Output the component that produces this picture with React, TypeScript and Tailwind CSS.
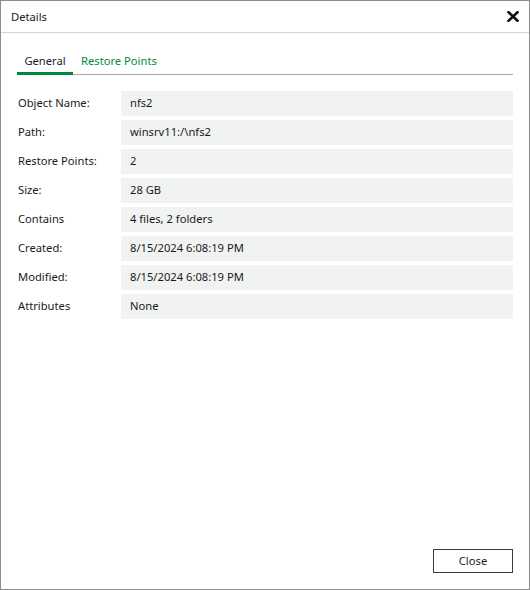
import React, { useState } from "react";

const rows: Array<[string, string]> = [
  ["Object Name:", "nfs2"],
  ["Path:", "winsrv11:/\\nfs2"],
  ["Restore Points:", "2"],
  ["Size:", "28 GB"],
  ["Contains", "4 files, 2 folders"],
  ["Created:", "8/15/2024 6:08:19 PM"],
  ["Modified:", "8/15/2024 6:08:19 PM"],
  ["Attributes", "None"],
];

export default function App() {
  const [tab, setTab] = useState("general");

  return (
    <div
      className="flex h-[590px] w-[530px] flex-col border border-[#8c8c8c] bg-white text-[11.2px] text-[#1a1a1a]"
      style={{ fontFamily: '"Noto Sans", "Open Sans", sans-serif' }}
    >
      <div className="flex h-[32px] shrink-0 items-center justify-between border-b border-[#d4d4d4] pl-[10px] pr-[9px]">
        <span className="pt-[1px]">Details</span>
        <button className="flex h-[14px] w-[14px] items-center justify-center">
          <svg width="12" height="11" viewBox="0 0 12 11">
            <path
              d="M1.5 1.2 L10.5 9.8 M10.5 1.2 L1.5 9.8"
              stroke="#111"
              strokeWidth="2.6"
              strokeLinecap="square"
            />
          </svg>
        </button>
      </div>

      <div className="flex flex-1 flex-col px-[16px]">
        <div className="mt-[20px] flex border-b border-[#a8a8a8]">
          <button
            className={`-mb-[1px] w-[56px] border-b-[3px] pb-[2px] text-center ${
              tab === "general" ? "border-[#008a3b] text-[#1a1a1a]" : "border-transparent text-[#008a3b]"
            }`}
            onClick={() => setTab("general")}
          >
            General
          </button>
          <button
            className={`-mb-[1px] ml-[8px] border-b-[3px] pb-[2px] ${
              tab === "restore" ? "border-[#008a3b] text-[#1a1a1a]" : "border-transparent text-[#008a3b]"
            }`}
            onClick={() => setTab("restore")}
          >
            Restore Points
          </button>
        </div>

        <div className="mt-[16px] flex flex-col gap-[4px]">
          {rows.map(([label, value]) => (
            <div key={label} className="flex h-[25px] items-center">
              <span className="w-[104px] shrink-0 pl-[1px]">{label}</span>
              <div className="flex h-full flex-1 items-center bg-[#f1f2f2] pl-[9px]">
                {value}
              </div>
            </div>
          ))}
        </div>

        <div className="mt-auto mb-[16px] flex justify-end">
          <button className="h-[24px] w-[80px] border border-[#3c3c3c] bg-white">
            Close
          </button>
        </div>
      </div>
    </div>
  );
}
